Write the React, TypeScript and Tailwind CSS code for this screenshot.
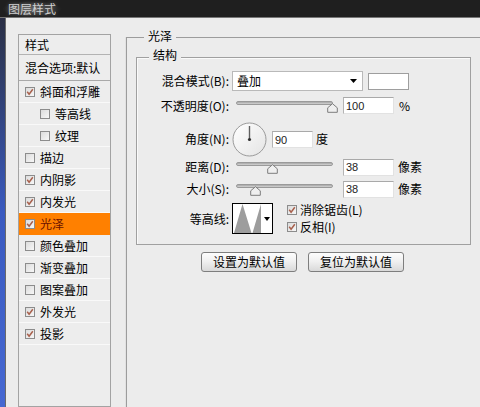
import React from "react";

interface StyleRow {
  name: string;
  checked?: boolean;
  indent?: boolean;
  active?: boolean;
}

const styleRows: StyleRow[] = [
  { name: "斜面和浮雕", checked: true },
  { name: "等高线", indent: true },
  { name: "纹理", indent: true },
  { name: "描边" },
  { name: "内阴影", checked: true },
  { name: "内发光", checked: true },
  { name: "光泽", checked: true, active: true },
  { name: "颜色叠加" },
  { name: "渐变叠加" },
  { name: "图案叠加" },
  { name: "外发光", checked: true },
  { name: "投影", checked: true },
];

function Check({ checked = false }: { checked?: boolean }) {
  return (
    <span className="flex h-[10px] w-[10px] shrink-0 items-center justify-center border border-[#8c8c8c] bg-gradient-to-br from-[#dcdcdc] to-[#f7f7f7]">
      {checked && (
        <svg viewBox="0 0 8 8" className="h-[8px] w-[8px]">
          <path d="M1.2 3.8 L3.1 6.2 L6.8 1.2" fill="none" stroke="#a8604c" strokeWidth="1.5" />
        </svg>
      )}
    </span>
  );
}

function NumBox({ value, width = "w-[51px]" }: { value: string; width?: string }) {
  return (
    <div
      className={`flex h-[17px] ${width} shrink-0 items-center border border-t-[#a9a9a9] border-l-[#b4b4b4] border-r-[#e2e2e2] border-b-[#e2e2e2] bg-white pl-[2px] font-['Liberation_Sans',sans-serif] text-[11px] text-[#222]`}
    >
      {value}
    </div>
  );
}

function Slider({ thumb }: { thumb: number }) {
  return (
    <div className="relative h-[12px] w-[108px] shrink-0">
      <div className="ml-[4px] mt-[2px] h-[4px] w-[97px] rounded-full border border-[#9a9a9a] bg-gradient-to-b from-[#a6a6a6] to-[#d4d4d4]" />
      {/* thumb sits over the track */}
      <svg
        viewBox="0 0 11 10"
        className="absolute top-[2px] h-[10px] w-[11px]"
        style={{ left: thumb }}
      >
        <path d="M5.5 0.7 L10.3 4.8 L10.3 9.3 L0.7 9.3 L0.7 4.8 Z" fill="#efefef" stroke="#7c7c7c" strokeWidth="1" />
      </svg>
    </div>
  );
}

function Label({ children }: { children: React.ReactNode }) {
  return <div className="w-[93px] shrink-0 pr-[1px] text-right">{children}</div>;
}

function Button({ children }: { children: React.ReactNode }) {
  return (
    <button
      type="button"
      className="flex h-[20px] w-[96px] items-center justify-center rounded-[3px] border border-[#7e7e7e] bg-gradient-to-b from-[#fdfdfd] via-[#efefef] to-[#d9d9d9] text-[12px] text-black"
    >
      {children}
    </button>
  );
}

function StyleList() {
  return (
    <div className="flex w-[93px] shrink-0 flex-col border border-[#a3a3a3] bg-[#ededed]">
      <div className="flex h-[20px] items-center border-b border-[#b3b3b3] pl-[6px]">样式</div>
      <div className="flex h-[26px] items-center border-b border-[#a9a9a9] pl-[6px]">混合选项:默认</div>
      {styleRows.map((row) => (
        <div
          key={row.name}
          className={`flex h-[22px] items-center gap-[5px] border-b ${
            row.active
              ? "border-[#ff8000] bg-[#ff8000] text-[#6b1200]"
              : "border-[#f9f9f9]"
          } ${row.indent ? "pl-[21px]" : "pl-[6px]"}`}
        >
          <Check checked={row.checked} />
          <span>{row.name}</span>
        </div>
      ))}
    </div>
  );
}

function Dial() {
  return (
    <svg viewBox="0 0 35 35" className="h-[35px] w-[35px] shrink-0">
      <defs>
        <linearGradient id="dialFill" x1="0" y1="0" x2="1" y2="1">
          <stop offset="0" stopColor="#ffffff" />
          <stop offset="1" stopColor="#e4e4e4" />
        </linearGradient>
      </defs>
      <circle cx="17.5" cy="17.5" r="16.5" fill="url(#dialFill)" stroke="#9a9a9a" strokeWidth="1" />
      <line x1="17.5" y1="17.5" x2="17.5" y2="4" stroke="#606060" strokeWidth="1.4" />
      <circle cx="17.5" cy="17.5" r="1.6" fill="#303030" />
    </svg>
  );
}

function Contour() {
  return (
    <div className="flex h-[31px] w-[41px] shrink-0 border border-black bg-white">
      <svg viewBox="0 0 29 29" className="h-[29px] w-[29px]">
        <path d="M1 29 L9.5 0 L18.5 29 L19.5 29 L28 0 L28 29 Z" fill="#9d9d9d" />
      </svg>
      <div className="flex flex-1 items-center justify-center">
        <svg viewBox="0 0 6 4" className="h-[4px] w-[6px]">
          <path d="M0 0 L6 0 L3 4 Z" fill="#000" />
        </svg>
      </div>
    </div>
  );
}

function Structure() {
  return (
    <div className="relative ml-[9px] mt-[19px] flex h-[188px] w-[335px] flex-col border border-[#a0a0a0] shadow-[inset_1px_1px_0_#fafafa]">
      <span className="absolute -top-[10px] left-[12px] bg-[#ececec] px-[4px]">结构</span>

      <div className="mt-[13px] flex h-[20px] items-center">
        <Label>混合模式(B):</Label>
        <div className="ml-[2px] flex h-[20px] w-[131px] items-center justify-between border border-[#b9b9b9] bg-white pl-[4px] pr-[5px]">
          <span>叠加</span>
          <svg viewBox="0 0 7 4" className="h-[4px] w-[7px]">
            <path d="M0 0 L7 0 L3.5 4 Z" fill="#000" />
          </svg>
        </div>
        <div className="ml-[5px] h-[17px] w-[41px] border border-[#9e9e9e] bg-white" />
      </div>

      <div className="mt-[5px] flex h-[19px] items-center">
        <Label>不透明度(O):</Label>
        <div className="ml-[2px]">
          <Slider thumb={95} />
        </div>
        <div className="ml-[3px]">
          <NumBox value="100" />
        </div>
        <span className="ml-[5px]">%</span>
      </div>

      <div className="mt-[6px] flex h-[36px] items-center">
        <Label>角度(N):</Label>
        <div className="ml-[2px]">
          <Dial />
        </div>
        <div className="ml-[5px] mt-[1px]">
          <NumBox value="90" width="w-[41px]" />
        </div>
        <span className="ml-[3px]">度</span>
      </div>

      <div className="mt-[2px] flex h-[16px] items-center">
        <Label>距离(D):</Label>
        <div className="ml-[2px]">
          <Slider thumb={35} />
        </div>
        <div className="ml-[3px]">
          <NumBox value="38" />
        </div>
        <span className="ml-[4px]">像素</span>
      </div>

      <div className="mt-[6px] flex h-[16px] items-center">
        <Label>大小(S):</Label>
        <div className="ml-[2px]">
          <Slider thumb={18} />
        </div>
        <div className="ml-[3px]">
          <NumBox value="38" />
        </div>
        <span className="ml-[4px]">像素</span>
      </div>

      <div className="mt-[6px] flex h-[31px] items-center">
        <Label>等高线:</Label>
        <div className="ml-[2px]">
          <Contour />
        </div>
        <div className="ml-[14px] flex flex-col">
          <div className="flex h-[17px] items-center gap-[3px]">
            <Check checked />
            <span>消除锯齿(L)</span>
          </div>
          <div className="flex h-[17px] items-center gap-[3px]">
            <Check checked />
            <span>反相(I)</span>
          </div>
        </div>
      </div>
    </div>
  );
}

export default function App() {
  return (
    <div className="flex h-[407px] w-[480px] flex-col overflow-hidden bg-[#ececec] font-['Noto_Sans_CJK_SC',sans-serif] text-[12px] leading-[14px] text-black">
      {/* title bar */}
      <div className="flex h-[18px] shrink-0 items-center border-b border-[#777] bg-[#1f1f1f]">
        <div className="ml-[2px] rounded-[8px] bg-[radial-gradient(ellipse_at_center,#555555,#1f1f1f_70%)] px-[6px] text-[12px] leading-[16px] text-[#cfcfcf] [text-shadow:0_0_4px_rgba(255,255,255,0.35)]">
          图层样式
        </div>
      </div>

      <div className="flex min-h-0 flex-1">
        <div className="w-[5px] shrink-0 bg-gradient-to-b from-[#2a2f45] via-[#3a5ac0] to-[#4668d2]" />
        <div className="w-px shrink-0 bg-[#6a6a6a]" />

        <div className="flex min-w-0 flex-1 pl-[12px] pt-[16px]">
          <StyleList />

          {/* 光泽 group */}
          <div className="relative ml-[15px] mt-[3px] flex w-[420px] shrink-0 flex-col border-l border-t border-[#9c9c9c] shadow-[-1px_0_0_#e2e2e2]">
            <span className="absolute -top-[9px] left-[17px] bg-[#ececec] px-[4px]">光泽</span>
            <Structure />
            <div className="ml-[74px] mt-[7px] flex gap-[11px]">
              <Button>设置为默认值</Button>
              <Button>复位为默认值</Button>
            </div>
          </div>
        </div>
      </div>
    </div>
  );
}
